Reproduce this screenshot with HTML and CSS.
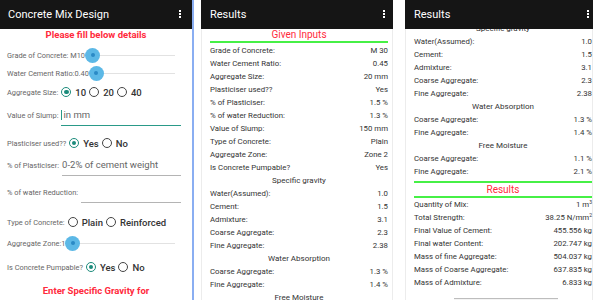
FILE: index.html
```html
<!DOCTYPE html>
<html>
<head>
<meta charset="utf-8">
<link rel="stylesheet" href="styles.css">
</head>
<body>
<div class="phone p1">
  <div class="bar"><span class="title">Concrete Mix Design</span><span class="dots"></span></div>
  <div class="form">
    <div class="notice">Please fill below details</div>
    <div class="frow r-grade"><span class="lbl">Grade of Concrete: M10</span><span class="thumb"></span><span class="track"></span></div>
    <div class="frow r-wcr"><span class="lbl">Water Cement Ratio:0.40</span><span class="thumb"></span><span class="track"></span></div>
    <div class="frow r-agg"><span class="lbl">Aggregate Size:</span>
      <span class="opt"><span class="radio on"></span>10</span>
      <span class="opt"><span class="radio"></span>20</span>
      <span class="opt"><span class="radio"></span>40</span>
    </div>
    <div class="frow irow r-slump"><span class="lbl">Value of Slump:</span><span class="field focus"><span class="caret"></span>in mm</span></div>
    <div class="frow r-plast"><span class="lbl">Plasticiser used??</span>
      <span class="opt"><span class="radio on"></span>Yes</span>
      <span class="opt"><span class="radio"></span>No</span>
    </div>
    <div class="frow irow r-pp"><span class="lbl">% of Plasticiser:</span><span class="field">0-2% of cement weight</span></div>
    <div class="frow irow r-wr"><span class="lbl">% of water Reduction:</span><span class="field"></span></div>
    <div class="frow r-type"><span class="lbl">Type of Concrete:</span>
      <span class="opt"><span class="radio"></span>Plain</span>
      <span class="opt"><span class="radio"></span>Reinforced</span>
    </div>
    <div class="frow r-zone"><span class="lbl">Aggregate Zone:1</span><span class="thumb"></span><span class="track"></span></div>
    <div class="frow r-pump"><span class="lbl">Is Concrete Pumpable?</span>
      <span class="opt"><span class="radio on"></span>Yes</span>
      <span class="opt"><span class="radio"></span>No</span>
    </div>
    <div class="notice r-sg">Enter Specific Gravity for</div>
  </div>
</div>

<div class="phone p2">
  <div class="bar"><span class="title">Results</span><span class="dots"></span></div>
  <div class="card">
    <div class="head">Given Inputs</div>
    <div class="gline"></div>
    <div class="row"><span>Grade of Concrete:</span><span>M 30</span></div>
    <div class="row"><span>Water Cement Ratio:</span><span>0.45</span></div>
    <div class="row"><span>Aggregate Size:</span><span>20 mm</span></div>
    <div class="row"><span>Plasticiser used??</span><span>Yes</span></div>
    <div class="row"><span>% of Plasticiser:</span><span>1.5 %</span></div>
    <div class="row"><span>% of water Reduction:</span><span>1.3 %</span></div>
    <div class="row"><span>Value of Slump:</span><span>150 mm</span></div>
    <div class="row"><span>Type of Concrete:</span><span>Plain</span></div>
    <div class="row"><span>Aggregate Zone:</span><span>Zone 2</span></div>
    <div class="row"><span>Is Concrete Pumpable?</span><span>Yes</span></div>
    <div class="sub">Specific gravity</div>
    <div class="row"><span>Water(Assumed):</span><span>1.0</span></div>
    <div class="row"><span>Cement:</span><span>1.5</span></div>
    <div class="row"><span>Admixture:</span><span>3.1</span></div>
    <div class="row"><span>Coarse Aggregate:</span><span>2.3</span></div>
    <div class="row"><span>Fine Aggregate:</span><span>2.38</span></div>
    <div class="sub">Water Absorption</div>
    <div class="row"><span>Coarse Aggregate:</span><span>1.3 %</span></div>
    <div class="row"><span>Fine Aggregate:</span><span>1.4 %</span></div>
    <div class="sub">Free Moisture</div>
  </div>
</div>

<div class="phone p3">
  <div class="bar"><span class="title">Results</span><span class="dots"></span></div>
  <div class="viewport">
    <div class="card scrolled">
      <div class="sub">Specific gravity</div>
      <div class="row"><span>Water(Assumed):</span><span>1.0</span></div>
      <div class="row"><span>Cement:</span><span>1.5</span></div>
      <div class="row"><span>Admixture:</span><span>3.1</span></div>
      <div class="row"><span>Coarse Aggregate:</span><span>2.3</span></div>
      <div class="row"><span>Fine Aggregate:</span><span>2.38</span></div>
      <div class="sub">Water Absorption</div>
      <div class="row"><span>Coarse Aggregate:</span><span>1.3 %</span></div>
      <div class="row"><span>Fine Aggregate:</span><span>1.4 %</span></div>
      <div class="sub">Free Moisture</div>
      <div class="row"><span>Coarse Aggregate:</span><span>1.1 %</span></div>
      <div class="row"><span>Fine Aggregate:</span><span>2.1 %</span></div>
      <div class="gline g-top"></div>
      <div class="head">Results</div>
      <div class="gline"></div>
      <div class="row"><span>Quantity of Mix:</span><span>1 m<sup>3</sup></span></div>
      <div class="row"><span>Total Strength:</span><span>38.25 N/mm<sup>2</sup></span></div>
      <div class="row"><span>Final Value of Cement:</span><span>455.556 kg</span></div>
      <div class="row"><span>Final water Content:</span><span>202.747 kg</span></div>
      <div class="row"><span>Mass of fine Aggregate:</span><span>504.037 kg</span></div>
      <div class="row"><span>Mass of Coarse Aggregate:</span><span>637.835 kg</span></div>
      <div class="row"><span>Mass of Admixture:</span><span>6.833 kg</span></div>
      <div class="btn"></div>
    </div>
  </div>
</div>
</body>
</html>
```

FILE: styles.css
```css
* { box-sizing: border-box; }
html, body { margin: 0; padding: 0; }
body {
  width: 600px;
  height: 300px;
  overflow: hidden;
  background: #fff;
  display: flex;
  font-family: Roboto, "Liberation Sans", sans-serif;
  color: #333;
}
.phone {
  height: 300px;
  display: flex;
  flex-direction: column;
  overflow: hidden;
  background: #fff;
  flex-shrink: 0;
}
.p1 { width: 194px; border-right: 2px solid #8aaef2; }
.p2 { width: 192px; margin-left: 7px; }
.p3 { width: 188px; margin-left: 12px; }

.bar {
  height: 29px;
  flex-shrink: 0;
  background: #151515;
  color: #fff;
  display: flex;
  align-items: center;
  justify-content: space-between;
  font-size: 11px;
  padding: 0 11px 0 8px;
}
.p2 .bar { padding: 0 8px 0 9px; }
.p3 .bar { padding: 0 4px 0 9px; }
.title { line-height: 1; }
.dots {
  width: 2px;
  height: 2px;
  background: #fff;
  box-shadow: 0 -3px 0 #fff, 0 3px 0 #fff;
  margin-top: -1px;
}

/* form */
.form { display: flex; flex-direction: column; }
.notice {
  color: #ff2a3c;
  font-size: 9.5px;
  font-weight: 700;
  text-align: center;
  line-height: 12px;
  height: 12px;
}
.frow {
  display: flex;
  align-items: center;
  height: 18px;
  padding-left: 7px;
  padding-right: 17px;
}
.lbl { font-size: 7.4px; color: #666; white-space: nowrap; }
.thumb {
  width: 15px;
  height: 15px;
  border-radius: 50%;
  background: #5cb8e6;
  flex-shrink: 0;
  display: flex;
  align-items: center;
  justify-content: center;
}
.thumb::after {
  content: "";
  width: 4px;
  height: 4px;
  border-radius: 50%;
  background: #2a8ac6;
}
.track { flex: 1; height: 1px; background: #e2e2e2; }
.opt {
  display: flex;
  align-items: center;
  font-size: 9.5px;
  font-weight: 500;
  color: #333;
  margin-left: 3px;
}
.radio {
  width: 10px;
  height: 10px;
  border-radius: 50%;
  border: 1.4px solid #444;
  margin-right: 4px;
  display: flex;
  align-items: center;
  justify-content: center;
}
.radio.on { border-color: #1b8b7b; }
.radio.on::after {
  content: "";
  width: 4.5px;
  height: 4.5px;
  border-radius: 50%;
  background: #1b8b7b;
}
.irow { height: 24px; align-items: flex-start; padding-right: 11px; }
.irow .lbl { line-height: 24px; }
.field {
  flex: 1;
  margin-left: 3px;
  height: 22px;
  line-height: 21px;
  font-size: 9.5px;
  color: #666;
  border-bottom: 1.4px solid #b4b4b4;
  display: flex;
  align-items: center;
}
.field.focus { border-bottom-color: #2a9a88; }
.caret { width: 1px; height: 10px; background: #2a9a88; margin-right: 1px; }

.r-grade { margin-top: 5px; }
.r-agg { margin-top: 1px; }
.r-agg .opt:first-of-type { margin-left: 4px; }
.r-slump { margin-top: 3px; }
.r-plast { margin-top: 6px; }
.r-plast .opt:first-of-type { margin-left: 4px; }
.r-pp { margin-top: 2px; }
.r-wr { margin-top: 3px; }
.r-type { margin-top: 8px; }
.r-type .opt:first-of-type { margin-left: 4px; }
.r-zone { margin-top: 3px; }
.r-pump { margin-top: 6px; }
.r-pump .opt:first-of-type { margin-left: 4px; }
.r-sg { margin-top: 9px; }

/* results */
.card {
  display: flex;
  flex-direction: column;
  padding: 0 5px 0 9px;
  border-left: 1px solid #ececec;
  border-right: 1px solid #ececec;
  flex: 1;
}
.p2 .card { padding-left: 8px; padding-right: 4px; }
.p3 .card { padding-left: 8px; padding-right: 0; }
.head {
  color: #ff2a3c;
  font-size: 10px;
  text-align: center;
  line-height: 13px;
  height: 13px;
}
.p2 .head { height: 12px; line-height: 12px; }
.gline { height: 2px; background: #46f046; margin-bottom: 1px; }
.g-top { margin-top: 3px; margin-bottom: 0; }
.row {
  display: flex;
  justify-content: space-between;
  align-items: center;
  height: 13px;
  font-size: 7.8px;
  color: #333;
  white-space: nowrap;
}
.row sup { font-size: 5px; vertical-align: 3px; line-height: 0; }
.sub {
  text-align: center;
  height: 13px;
  line-height: 13px;
  font-size: 8px;
  color: #333;
}
.viewport { flex: 1; overflow: hidden; display: flex; flex-direction: column; }
.scrolled { margin-top: -7px; }
.p3 .gline + .row { margin-top: -1px; }
.btn {
  width: 104px;
  margin: 9px auto 0 auto;
  height: 12px;
  border-top: 1.5px solid #bdbdbd;
  background: #f4f4f4;
  position: relative;
  left: 3px;
}
```
